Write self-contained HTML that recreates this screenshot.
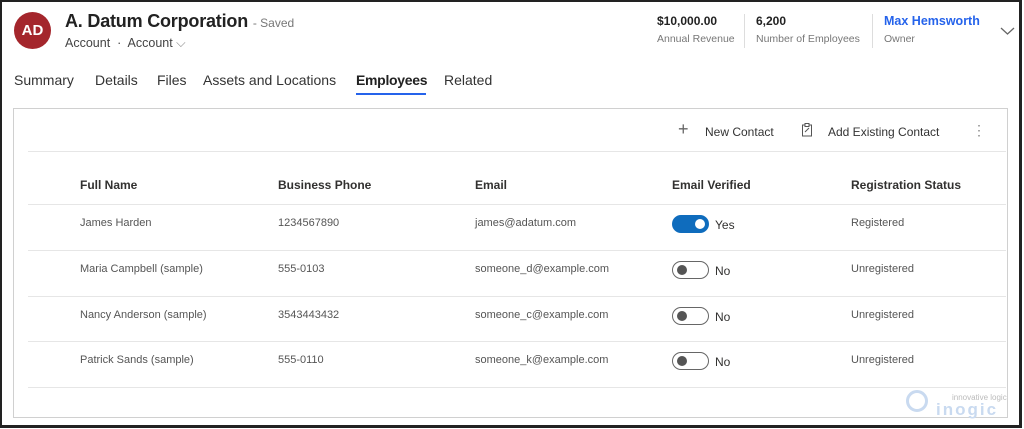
<!DOCTYPE html>
<html><head><style>
*{margin:0;padding:0;box-sizing:border-box}
body{width:1024px;height:429px;background:#fff;font-family:"Liberation Sans",sans-serif;position:relative;overflow:hidden;color:#323130}
.a{position:absolute;white-space:nowrap}
.frame{position:absolute;left:0;top:0;width:1022px;height:428px;border:2px solid #222;border-right-width:3px;border-bottom-width:3px}
.hd{font-size:12px;font-weight:bold;color:#323130}
.c{font-size:11px;color:#555}
.line{position:absolute;left:28px;width:978px;height:1px;background:#e6e6e6}
.tog{position:absolute;width:37px;height:18px;border-radius:9px;border:1px solid #666}
.tog i{position:absolute;top:3px;left:4px;width:10px;height:10px;border-radius:50%;background:#555}
.on{background:#0f6cbd;border-color:#0f6cbd}
.on i{left:22px;background:#fff}
.t{font-size:14px;color:#333;top:72px}
</style></head><body>
<div class="frame"></div>
<div class="a" style="left:14px;top:12px;width:37px;height:37px;border-radius:50%;background:#a4262c;color:#fff;font-weight:bold;font-size:15px;line-height:37px;text-align:center">AD</div>
<div class="a" style="left:65px;top:11px;font-size:18px;font-weight:bold;color:#222;letter-spacing:-0.2px">A. Datum Corporation <span style="font-size:12px;font-weight:normal;color:#777;letter-spacing:0">- Saved</span></div>
<div class="a" style="left:65px;top:36px;font-size:12.5px;color:#444">Account &nbsp;·&nbsp; Account <span style="color:#888">⌵</span></div>
<div class="a" style="left:657px;top:14px;font-size:12px;font-weight:bold;color:#222">$10,000.00</div>
<div class="a" style="left:657px;top:33px;font-size:10.5px;color:#777">Annual Revenue</div>
<div class="a" style="left:744px;top:14px;width:1px;height:34px;background:#ddd"></div>
<div class="a" style="left:756px;top:14px;font-size:12px;font-weight:bold;color:#222">6,200</div>
<div class="a" style="left:756px;top:33px;font-size:10.5px;color:#777">Number of Employees</div>
<div class="a" style="left:872px;top:14px;width:1px;height:34px;background:#ddd"></div>
<div class="a" style="left:884px;top:14px;font-size:12.5px;font-weight:bold;color:#2563eb">Max Hemsworth</div>
<div class="a" style="left:884px;top:33px;font-size:10.5px;color:#777">Owner</div>
<svg class="a" style="left:1000px;top:26px" width="15" height="10"><path d="M1 2 L7.5 8 L14 2" stroke="#666" fill="none" stroke-width="1.3"/></svg>
<div class="a t" style="left:14px">Summary</div>
<div class="a t" style="left:95px">Details</div>
<div class="a t" style="left:157px">Files</div>
<div class="a t" style="left:203px">Assets and Locations</div>
<div class="a t" style="left:356px;font-weight:bold;color:#222;letter-spacing:-0.3px">Employees</div>
<div class="a" style="left:356px;top:93px;width:70px;height:2px;background:#2563eb"></div>
<div class="a t" style="left:444px">Related</div>
<div class="a" style="left:13px;top:108px;width:995px;height:310px;border:1px solid #d0d0d0"></div>
<div class="a" style="left:678px;top:119px;font-size:18px;color:#666;font-weight:300">+</div>
<div class="a" style="left:705px;top:125px;font-size:12px;color:#333">New Contact</div>
<svg class="a" style="left:801px;top:123px" width="12" height="14"><rect x="1.5" y="2" width="9" height="11" fill="none" stroke="#555"/><rect x="4" y="0.5" width="4" height="3" fill="#fff" stroke="#555"/><path d="M4 9l4-4" stroke="#555"/></svg>
<div class="a" style="left:828px;top:125px;font-size:12px;color:#333">Add Existing Contact</div>
<div class="a" style="left:972px;top:122px;font-size:14px;color:#888">⋮</div>
<div class="line" style="top:151px"></div>
<div class="a hd" style="left:80px;top:178px">Full Name</div>
<div class="a hd" style="left:278px;top:178px">Business Phone</div>
<div class="a hd" style="left:475px;top:178px">Email</div>
<div class="a hd" style="left:672px;top:178px">Email Verified</div>
<div class="a hd" style="left:851px;top:178px">Registration Status</div>
<div class="line" style="top:204px"></div>
<div class="a c" style="left:80px;top:217px">James Harden</div>
<div class="a c" style="left:278px;top:217px">1234567890</div>
<div class="a c" style="left:475px;top:217px">james@adatum.com</div>
<div class="tog on" style="left:672px;top:215px"><i></i></div>
<div class="a" style="left:715px;top:218px;font-size:12px">Yes</div>
<div class="a c" style="left:851px;top:217px">Registered</div>
<div class="line" style="top:250px"></div>
<div class="a c" style="left:80px;top:263px">Maria Campbell (sample)</div>
<div class="a c" style="left:278px;top:263px">555-0103</div>
<div class="a c" style="left:475px;top:263px">someone_d@example.com</div>
<div class="tog" style="left:672px;top:261px"><i></i></div>
<div class="a" style="left:715px;top:264px;font-size:12px">No</div>
<div class="a c" style="left:851px;top:263px">Unregistered</div>
<div class="line" style="top:296px"></div>
<div class="a c" style="left:80px;top:309px">Nancy Anderson (sample)</div>
<div class="a c" style="left:278px;top:309px">3543443432</div>
<div class="a c" style="left:475px;top:309px">someone_c@example.com</div>
<div class="tog" style="left:672px;top:307px"><i></i></div>
<div class="a" style="left:715px;top:310px;font-size:12px">No</div>
<div class="a c" style="left:851px;top:309px">Unregistered</div>
<div class="line" style="top:341px"></div>
<div class="a c" style="left:80px;top:354px">Patrick Sands (sample)</div>
<div class="a c" style="left:278px;top:354px">555-0110</div>
<div class="a c" style="left:475px;top:354px">someone_k@example.com</div>
<div class="tog" style="left:672px;top:352px"><i></i></div>
<div class="a" style="left:715px;top:355px;font-size:12px">No</div>
<div class="a c" style="left:851px;top:354px">Unregistered</div>
<div class="line" style="top:387px"></div>
<div class="a" style="left:906px;top:390px;width:22px;height:22px;border-radius:50%;border:3px solid #c9daf0"></div>
<div class="a" style="left:952px;top:393px;font-size:8px;color:#bbb">innovative logic</div>
<div class="a" style="left:936px;top:400px;font-size:17px;color:#c9daf0;letter-spacing:2px;font-weight:bold">inogic</div>
</body></html>
